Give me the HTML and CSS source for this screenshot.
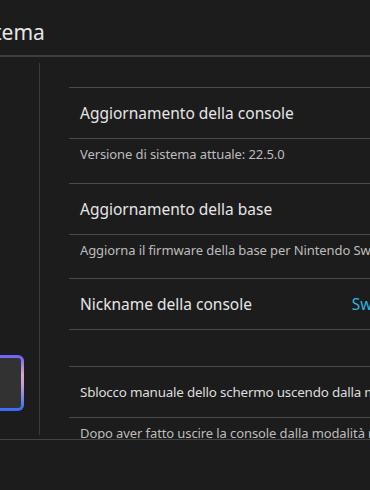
FILE: index.html
```html
<!DOCTYPE html>
<html><head><title>Impostazioni della console</title><meta charset="utf-8">
<link rel="stylesheet" href="styles.css">
</head>
<body>
<div class="testata"><h1>Sistema</h1></div>
<div class="corpo">
    <div class="menu">
        <div class="voceAttiva"></div>
    </div>
    <div class="contenuto">
        <div class="voce primo"><span>Aggiornamento della console</span></div>
        <div class="nota">Versione di sistema attuale: 22.5.0</div>
        <div class="voce"><span>Aggiornamento della base</span></div>
        <div class="nota">Aggiorna il firmware della base per Nintendo Switch 2.</div>
        <div class="voce"><span>Nickname della console</span><span class="valore">Switch 2</span></div>
        <div class="vuoto"></div>
        <div class="voce primo piccola"><span>Sblocco manuale dello schermo uscendo dalla modalità riposo</span></div>
        <div class="nota">Dopo aver fatto uscire la console dalla modalità riposo, sblocca lo schermo.</div>
    </div>
</div>
<div class="piede"></div>
</body>
</html>
```

FILE: styles.css
```css
* {box-sizing:border-box;}
html, body {margin:0; padding:0; background:#1c1c1c; overflow:hidden;}
body {width:370px; height:490px; font-family:"Noto Sans", sans-serif; color:#e6e6e6;}

.testata {height:57px; border-bottom:2px solid #3d3d3d; overflow:hidden;}
.testata h1 {margin:0 0 0 -33px; padding-top:22px; font-size:21px; font-weight:normal; line-height:1;}

.corpo {display:flex; height:383px; border-bottom:1px solid #444;}
.menu {width:40px; border-right:1px solid #3a3a3a; margin:6px 0 4px 0; display:flex; flex-direction:column;}
.voceAttiva {margin:292px 15px 0 -10px; height:56px; border-radius:6px;
    border:3px solid transparent;
    background:linear-gradient(#323232,#323232) padding-box,
               linear-gradient(to bottom,#6a60fb 0%,#dca6c6 35%,#c39bd2 55%,#2f6cf6 100%) border-box;}

.contenuto {flex:1; padding-left:29px; margin-top:30px; overflow:hidden; white-space:nowrap;}
.voce {height:51px; border-bottom:1px solid #4a4a4a; display:flex; align-items:center; justify-content:space-between; padding:0 0 0 11px; font-size:15.5px;}
.voce.primo {height:52px; border-top:1px solid #4a4a4a;}
.voce.piccola {font-size:13.4px; letter-spacing:-0.2px; color:#dedede;}
.valore {color:#2fb3df; margin-right:-42px;}
.nota {height:44.5px; padding:6px 0 0 11px; font-size:13px; letter-spacing:-0.1px; color:#bdbdbd; border-bottom:1px solid #4a4a4a;}
.vuoto {height:36px;}
.piede {height:50px;}
```
